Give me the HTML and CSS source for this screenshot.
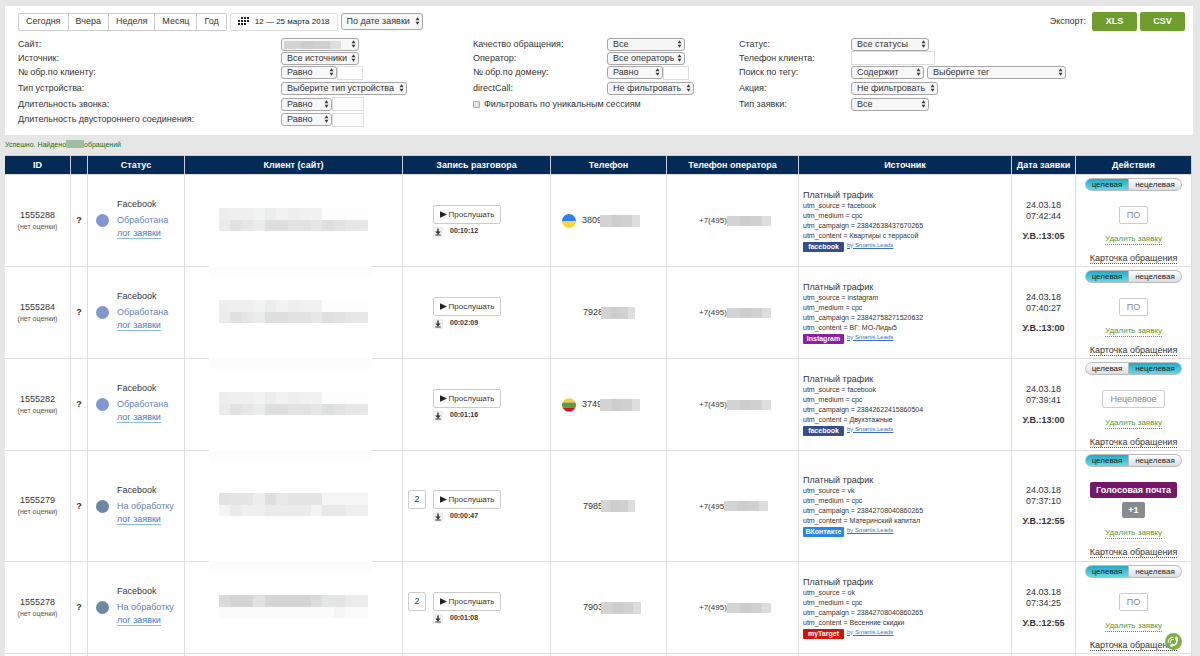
FILE: index.html
```html
<!DOCTYPE html>
<html lang="ru">
<head>
<meta charset="utf-8">
<title>Обращения</title>
<link rel="stylesheet" href="styles.css">
</head>
<body>
<svg class="defs" aria-hidden="true">
  <symbol id="updown" viewBox="0 0 6 9"><path d="M3 0L5.4 3.7H.6zM3 9L.6 5.3h4.8z" fill="#3c3c3c"/></symbol>
  <symbol id="play" viewBox="0 0 7 7"><path d="M0 .3L7 3.5 0 6.7z" fill="#222"/></symbol>
  <symbol id="down" viewBox="0 0 10 10"><path d="M4.3 1.5h1.4v3h2L5 7.4 2.300 4.500h2zM2.300 7.600h5.400v.9H2.300z" fill="#333"/></symbol>
  <symbol id="mosaic-a" viewBox="0 0 13 2" preserveAspectRatio="none">
    <g shape-rendering="crispEdges">
    <rect width="1" height="1" fill="#eeeeec"/><rect x="1" width="2" height="1" fill="#efefef"/><rect x="3" width="1" height="1" fill="#f1f3f2"/><rect x="4" width="1" height="1" fill="#ececec"/><rect x="5" width="1" height="1" fill="#f2f2f3"/><rect x="6" width="1" height="1" fill="#eee"/><rect x="7" width="2" height="1" fill="#f0f1f0"/><rect x="9" width="4" height="1" fill="#fdfdfd"/>
    <rect y="1" width="1" height="1" fill="#ebebeb"/><rect x="1" y="1" width="1" height="1" fill="#e1e1e1"/><rect x="2" y="1" width="1" height="1" fill="#e7e6e5"/><rect x="3" y="1" width="1" height="1" fill="#e9ebed"/><rect x="4" y="1" width="2" height="1" fill="#dededf"/><rect x="6" y="1" width="2" height="1" fill="#e2e2e2"/><rect x="8" y="1" width="1" height="1" fill="#e6e6e6"/><rect x="9" y="1" width="1" height="1" fill="#dedfdf"/><rect x="10" y="1" width="1" height="1" fill="#e1e3e2"/><rect x="11" y="1" width="1" height="1" fill="#e6e6e6"/><rect x="12" y="1" width="1" height="1" fill="#e5e7e9"/>
    </g>
  </symbol>
  <symbol id="mosaic-b" viewBox="0 0 13 2" preserveAspectRatio="none">
    <g shape-rendering="crispEdges">
    <rect width="1" height="1" fill="#e3e3e1"/><rect x="1" width="2" height="1" fill="#e5e5e5"/><rect x="3" width="1" height="1" fill="#ebeeed"/><rect x="4" width="1" height="1" fill="#dfdfdf"/><rect x="5" width="1" height="1" fill="#e8e8e8"/><rect x="6" width="3" height="1" fill="#e5e5e5"/><rect x="9" width="4" height="1" fill="#f5f5f5"/>
    <rect y="1" width="1" height="1" fill="#f4f4f4"/><rect x="1" y="1" width="1" height="1" fill="#eaeaea"/><rect x="2" y="1" width="2" height="1" fill="#efefee"/><rect x="4" y="1" width="4" height="1" fill="#ebebeb"/><rect x="8" y="1" width="1" height="1" fill="#f4f4f4"/><rect x="9" y="1" width="2" height="1" fill="#e8e8e8"/><rect x="11" y="1" width="2" height="1" fill="#eee"/>
    </g>
  </symbol>
  <symbol id="mosaic-c" viewBox="0 0 13 2" preserveAspectRatio="none">
    <g shape-rendering="crispEdges">
    <rect width="1" height="1" fill="#dadada"/><rect x="1" width="2" height="1" fill="#d5d5d5"/><rect x="3" width="1" height="1" fill="#e0e3e2"/><rect x="4" width="4" height="1" fill="#d5d5d6"/><rect x="8" width="1" height="1" fill="#dcdcdc"/><rect x="9" width="2" height="1" fill="#e4e5e5"/><rect x="11" width="2" height="1" fill="#ebebeb"/>
    <rect y="1" width="13" height="1" fill="#fafafa"/><rect x="10" y="1" width="1" height="1" fill="#f4f6f6"/>
    </g>
  </symbol>
</svg>

<section class="panel">
  <div class="topbar">
    <div class="periods">
      <button type="button">Сегодня</button><button type="button">Вчера</button><button type="button">Неделя</button><button type="button">Месяц</button><button type="button">Год</button>
    </div>
    <button type="button" class="range">
      <svg width="11" height="9" viewBox="0 0 11 9" aria-hidden="true"><g fill="#222"><rect x="3" width="2" height="2"/><rect x="6" width="2" height="2"/><rect x="9" width="2" height="2"/><rect y="3" width="2" height="2"/><rect x="3" y="3" width="2" height="2"/><rect x="6" y="3" width="2" height="2"/><rect x="9" y="3" width="2" height="2"/><rect y="6" width="2" height="2"/><rect x="3" y="6" width="2" height="2"/><rect x="6" y="6" width="2" height="2"/></g></svg>
      <span>12 — 25 марта 2018</span>
    </button>
    <span class="sel sel-sort"><select aria-label="Сортировка"><option>По дате заявки</option></select><svg><use href="#updown"/></svg></span>
    <span class="export-label">Экспорт:</span>
    <button type="button" class="export">XLS</button>
    <button type="button" class="export">CSV</button>
  </div>

  <form class="filters">
    <label for="site">Сайт:</label>
    <div class="ctl"><span class="sel w-m"><select id="site"><option></option></select><i class="veil veil-site"></i><svg><use href="#updown"/></svg></span></div>
    <label for="quality">Качество обращения:</label>
    <div class="ctl"><span class="sel w-m"><select id="quality"><option>Все</option></select><svg><use href="#updown"/></svg></span></div>
    <label for="status">Статус:</label>
    <div class="ctl"><span class="sel w-m"><select id="status"><option>Все статусы</option></select><svg><use href="#updown"/></svg></span></div>

    <label for="source">Источник:</label>
    <div class="ctl"><span class="sel w-m"><select id="source"><option>Все источники</option></select><svg><use href="#updown"/></svg></span></div>
    <label for="oper">Оператор:</label>
    <div class="ctl"><span class="sel w-m"><select id="oper"><option>Все операторы</option></select><svg><use href="#updown"/></svg></span></div>
    <label for="phone">Телефон клиента:</label>
    <div class="ctl"><input type="text" id="phone" class="in-l"></div>

    <label for="numc">№ обр.по клиенту:</label>
    <div class="ctl"><span class="sel w-s"><select id="numc"><option>Равно</option></select><svg><use href="#updown"/></svg></span><input type="text" class="in-s" aria-label="№ обр.по клиенту"></div>
    <label for="numd">№ обр.по домену:</label>
    <div class="ctl"><span class="sel w-s"><select id="numd"><option>Равно</option></select><svg><use href="#updown"/></svg></span><input type="text" class="in-s" aria-label="№ обр.по домену"></div>
    <label for="tag">Поиск по тегу:</label>
    <div class="ctl ctl-gap"><span class="sel w-t"><select id="tag"><option>Содержит</option></select><svg><use href="#updown"/></svg></span><span class="sel w-xl"><select aria-label="Тег"><option>Выберите тег</option></select><svg><use href="#updown"/></svg></span></div>

    <label for="device">Тип устройства:</label>
    <div class="ctl"><span class="sel w-l"><select id="device"><option>Выберите тип устройства</option></select><svg><use href="#updown"/></svg></span></div>
    <label for="direct">directCall:</label>
    <div class="ctl"><span class="sel w-n"><select id="direct"><option>Не фильтровать</option></select><svg><use href="#updown"/></svg></span></div>
    <label for="promo">Акция:</label>
    <div class="ctl"><span class="sel w-n"><select id="promo"><option>Не фильтровать</option></select><svg><use href="#updown"/></svg></span></div>

    <label for="dur">Длительность звонка:</label>
    <div class="ctl"><span class="sel w-xs"><select id="dur"><option>Равно</option></select><svg><use href="#updown"/></svg></span><input type="text" class="in-m" aria-label="Длительность звонка"></div>
    <div class="check"><input type="checkbox" id="uniq"><label for="uniq">Фильтровать по уникальным сессиям</label></div>
    <label for="kind">Тип заявки:</label>
    <div class="ctl"><span class="sel w-m"><select id="kind"><option>Все</option></select><svg><use href="#updown"/></svg></span></div>

    <label for="dur2">Длительность двустороннего соединения:</label>
    <div class="ctl"><span class="sel w-xs"><select id="dur2"><option>Равно</option></select><svg><use href="#updown"/></svg></span><input type="text" class="in-m" aria-label="Длительность двустороннего соединения"></div>
  </form>
</section>

<p class="found">Успешно. Найдено<i class="veil veil-count"></i>обращений</p>

<table class="leads">
  <colgroup><col class="c-id"><col class="c-q"><col class="c-status"><col><col class="c-rec"><col class="c-phone"><col class="c-oper"><col class="c-src"><col class="c-date"><col class="c-act"></colgroup>
  <thead>
    <tr><th>ID</th><th></th><th>Статус</th><th>Клиент (сайт)</th><th>Запись разговора</th><th>Телефон</th><th>Телефон оператора</th><th>Источник</th><th>Дата заявки</th><th>Действия</th></tr>
  </thead>
  <tbody>
    <tr>
      <td class="id">1555288<small>(нет оценки)</small></td>
      <td class="q">?</td>
      <td><div class="status done"><i class="dot"></i><div><p>Facebook</p><p class="state">Обработана</p><a href="#log">лог заявки</a></div></div></td>
      <td class="client"><svg class="mosaic"><use href="#mosaic-a"/></svg></td>
      <td><div class="rec"><button type="button" class="listen"><svg><use href="#play"/></svg>Прослушать</button><div class="time"><a href="#dl" class="dl" aria-label="Скачать"><svg><use href="#down"/></svg></a><b>00:10:12</b></div></div></td>
      <td><div class="phone"><svg class="flag" viewBox="0 0 14 14"><path d="M0 7a7 7 0 0 1 14 0z" fill="#2f80ed"/><path d="M0 7a7 7 0 0 0 14 0z" fill="#ffd43b"/></svg><span>3809</span><i class="veil"></i></div></td>
      <td><div class="oper">+7(495)<i class="veil"></i></div></td>
      <td><div class="src"><h4>Платный трафик</h4><p>utm_source = facebook</p><p>utm_medium = cpc</p><p>utm_campaign = 23842638437670265</p><p>utm_content = Квартиры с террасой</p><div class="from"><span class="tag fb">facebook</span><a href="#sl">by Smartis.Leads</a></div></div></td>
      <td class="date">24.03.18<br>07:42:44<b>У.В.:13:05</b></td>
      <td class="act"><div class="toggle"><button type="button" class="on">целевая</button><button type="button">нецелевая</button></div><div class="marks"><button type="button" class="mark">ПО</button></div><a href="#del" class="del">Удалить заявку</a><a href="#card" class="card">Карточка обращения</a></td>
    </tr>
    <tr>
      <td class="id">1555284<small>(нет оценки)</small></td>
      <td class="q">?</td>
      <td><div class="status done"><i class="dot"></i><div><p>Facebook</p><p class="state">Обработана</p><a href="#log">лог заявки</a></div></div></td>
      <td class="client"><i class="mask"></i><svg class="mosaic"><use href="#mosaic-a"/></svg></td>
      <td><div class="rec"><button type="button" class="listen"><svg><use href="#play"/></svg>Прослушать</button><div class="time"><a href="#dl" class="dl" aria-label="Скачать"><svg><use href="#down"/></svg></a><b>00:02:09</b></div></div></td>
      <td><div class="phone"><span>7928</span><i class="veil veil-s"></i></div></td>
      <td><div class="oper">+7(495)<i class="veil"></i></div></td>
      <td><div class="src"><h4>Платный трафик</h4><p>utm_source = instagram</p><p>utm_medium = cpc</p><p>utm_campaign = 23842758271520632</p><p>utm_content = ВГ: МО-Лиды5</p><div class="from"><span class="tag ig">instagram</span><a href="#sl">by Smartis.Leads</a></div></div></td>
      <td class="date">24.03.18<br>07:40:27<b>У.В.:13:00</b></td>
      <td class="act"><div class="toggle"><button type="button" class="on">целевая</button><button type="button">нецелевая</button></div><div class="marks"><button type="button" class="mark">ПО</button></div><a href="#del" class="del">Удалить заявку</a><a href="#card" class="card">Карточка обращения</a></td>
    </tr>
    <tr>
      <td class="id">1555282<small>(нет оценки)</small></td>
      <td class="q">?</td>
      <td><div class="status done"><i class="dot"></i><div><p>Facebook</p><p class="state">Обработана</p><a href="#log">лог заявки</a></div></div></td>
      <td class="client"><i class="mask"></i><svg class="mosaic"><use href="#mosaic-a"/></svg></td>
      <td><div class="rec"><button type="button" class="listen"><svg><use href="#play"/></svg>Прослушать</button><div class="time"><a href="#dl" class="dl" aria-label="Скачать"><svg><use href="#down"/></svg></a><b>00:01:16</b></div></div></td>
      <td><div class="phone"><svg class="flag" viewBox="0 0 14 14"><path d="M.6 4.500a7 7 0 0 1 12.800 0z" fill="#f9cf3a"/><path d="M.5 4.500h13a7 7 0 0 1 0 5H.5a7 7 0 0 1 0-5z" fill="#5f9b3c"/><path d="M.6 9.500a7 7 0 0 0 12.800 0z" fill="#d80f2a"/></svg><span>3749</span><i class="veil"></i></div></td>
      <td><div class="oper">+7(495)<i class="veil"></i></div></td>
      <td><div class="src"><h4>Платный трафик</h4><p>utm_source = facebook</p><p>utm_medium = cpc</p><p>utm_campaign = 23842622415860504</p><p>utm_content = Двухэтажные</p><div class="from"><span class="tag fb">facebook</span><a href="#sl">by Smartis.Leads</a></div></div></td>
      <td class="date">24.03.18<br>07:39:41<b>У.В.:13:00</b></td>
      <td class="act"><div class="toggle"><button type="button">целевая</button><button type="button" class="on">нецелевая</button></div><div class="marks"><button type="button" class="mark">Нецелевое</button></div><a href="#del" class="del">Удалить заявку</a><a href="#card" class="card">Карточка обращения</a></td>
    </tr>
    <tr class="tall">
      <td class="id">1555279<small>(нет оценки)</small></td>
      <td class="q">?</td>
      <td><div class="status todo"><i class="dot"></i><div><p>Facebook</p><p class="state">На обработку</p><a href="#log">лог заявки</a></div></div></td>
      <td class="client"><i class="mask"></i><svg class="mosaic"><use href="#mosaic-b"/></svg></td>
      <td><div class="rec"><button type="button" class="count">2</button><button type="button" class="listen"><svg><use href="#play"/></svg>Прослушать</button><div class="time"><a href="#dl" class="dl" aria-label="Скачать"><svg><use href="#down"/></svg></a><b>00:00:47</b></div></div></td>
      <td><div class="phone"><span>7985</span><i class="veil veil-s"></i></div></td>
      <td><div class="oper">+7(495<i class="veil"></i></div></td>
      <td><div class="src"><h4>Платный трафик</h4><p>utm_source = vk</p><p>utm_medium = cpc</p><p>utm_campaign = 23842708040860265</p><p>utm_content = Материнский капитал</p><div class="from"><span class="tag vk">ВКонтакте</span><a href="#sl">by Smartis.Leads</a></div></div></td>
      <td class="date">24.03.18<br>07:37:10<b>У.В.:12:55</b></td>
      <td class="act"><div class="toggle"><button type="button" class="on">целевая</button><button type="button">нецелевая</button></div><div class="marks"><button type="button" class="mark voice">Голосовая почта</button><button type="button" class="mark plus">+1</button></div><a href="#del" class="del">Удалить заявку</a><a href="#card" class="card">Карточка обращения</a></td>
    </tr>
    <tr>
      <td class="id">1555278<small>(нет оценки)</small></td>
      <td class="q">?</td>
      <td><div class="status todo"><i class="dot"></i><div><p>Facebook</p><p class="state">На обработку</p><a href="#log">лог заявки</a></div></div></td>
      <td class="client"><i class="mask"></i><svg class="mosaic"><use href="#mosaic-c"/></svg></td>
      <td><div class="rec"><button type="button" class="count">2</button><button type="button" class="listen"><svg><use href="#play"/></svg>Прослушать</button><div class="time"><a href="#dl" class="dl" aria-label="Скачать"><svg><use href="#down"/></svg></a><b>00:01:08</b></div></div></td>
      <td><div class="phone"><span>7903</span><i class="veil"></i></div></td>
      <td><div class="oper">+7(495)<i class="veil"></i></div></td>
      <td><div class="src"><h4>Платный трафик</h4><p>utm_source = ok</p><p>utm_medium = cpc</p><p>utm_campaign = 23842708040860265</p><p>utm_content = Весенние скидки</p><div class="from"><span class="tag mt">myTarget</span><a href="#sl">by Smartis.Leads</a></div></div></td>
      <td class="date">24.03.18<br>07:34:25<b>У.В.:12:55</b></td>
      <td class="act"><div class="toggle"><button type="button" class="on">целевая</button><button type="button">нецелевая</button></div><div class="marks"><button type="button" class="mark">ПО</button></div><a href="#del" class="del">Удалить заявку</a><a href="#card" class="card">Карточка обращения</a></td>
    </tr>
    <tr class="next"><td></td><td></td><td></td><td></td><td></td><td></td><td></td><td></td><td></td><td></td></tr>
  </tbody>
</table>

<button type="button" class="call" aria-label="Обратный звонок">
  <svg viewBox="0 0 17 17"><circle cx="8.500" cy="8.500" r="8.500" fill="#7fae45"/><g fill="none" stroke="#fff" stroke-linecap="round"><path d="M6.500 12.800Q13.300 12.500 11.800 4.800" stroke-width="1.500"/><path d="M6.400 12.400l1.300-.6M11.300 4.900l.3 1.700" stroke-width="2.400"/><path d="M3.200 9.500a4.600 4.600 0 0 1 5-5.400M5.400 9.600a2.500 2.500 0 0 1 3-3.200"/></g></svg>
</button>
</body>
</html>
```
FILE: styles.css
```css
* { box-sizing: border-box; }
body {
  margin: 0;
  padding: 6px 8px 0 5px;
  background: #e6e6e6;
  color: #333;
  font: 9px/11px "Liberation Sans", Arial, sans-serif;
}
p, h4 { margin: 0; font-weight: normal; }
button, input, select { margin: 0; font: inherit; color: inherit; }
button { padding: 0; cursor: pointer; }
.defs { display: none; }

/* filter panel */
.panel { margin-right: -1px; padding: 6px 8px 8px 13px; background: #fff; }
.topbar { display: flex; align-items: center; gap: 3px; height: 19px; }
.periods { display: flex; }
.periods button {
  height: 18px;
  padding: 0 7px;
  border: 1px solid #ccc;
  border-left-width: 0;
  background: #fff;
}
.periods button:first-child { border-left-width: 1px; border-radius: 2px 0 0 2px; }
.periods button:last-child { border-radius: 0 2px 2px 0; }
.range {
  display: flex;
  align-items: center;
  gap: 6px;
  height: 18px;
  padding: 0 7px;
  border: 1px solid #ddd;
  border-radius: 2px;
  background: #fff;
  color: #222;
  font-size: 8px;
}
.export-label { margin-left: auto; padding-right: 3px; }
.export {
  width: 45px;
  height: 19px;
  border: 0;
  border-radius: 2px;
  background: #6f9e2c;
  color: #fff;
  font-weight: bold;
}

.sel { position: relative; display: inline-flex; height: 13px; }
.sel select {
  width: 100%;
  height: 100%;
  padding: 0 10px 0 5px;
  border: 1px solid #a6a6a6;
  border-radius: 3px;
  background: #f7f7f7;
  line-height: 11px;
  appearance: none;
}
.sel svg { position: absolute; top: 2px; right: 3px; width: 5px; height: 8px; pointer-events: none; }
.sel-sort { width: 82px; height: 17px; }
.sel-sort svg { top: 4px; }
.w-xs { width: 51px; }
.w-s { width: 56px; }
.w-t { width: 73px; }
.w-m { width: 78px; }
.w-n { width: 87px; }
.w-l { width: 126px; }
.w-xl { width: 139px; }

.filters {
  display: grid;
  grid-template-columns: 263fr 192fr 134fr 132fr 112fr 334fr;
  grid-template-rows: 14px 14px 15px 16px 16px 15px;
  align-items: center;
  margin-top: 6px;
}
.ctl { display: flex; align-items: center; white-space: nowrap; }
.ctl-gap { gap: 3px; }
.filters input[type="text"] { height: 14px; padding: 0 2px; border: 1px solid #ddd; background: #fff; }
.in-s { width: 26px; }
.in-m { width: 32px; }
.in-l { width: 84px; }
.check { display: flex; align-items: center; gap: 4px; grid-column: span 2; }
.check input {
  width: 7px;
  height: 7px;
  border: 1px solid #aaa;
  border-radius: 1px;
  background: #e6e6e6;
  appearance: none;
}

/* blurred-out values */
.veil {
  display: inline-block;
  background: linear-gradient(90deg, #d3d3d3 0 30%, #cdcdcd 30% 55%, #d0d0d0 55% 80%, #dcdddf 80%);
}
.veil-site { position: absolute; top: 3px; left: 3px; width: 57px; height: 8px; }
.veil-count { width: 18px; height: 8px; background: #9fbd9f; vertical-align: -1px; }

.found { height: 20px; color: #10700f; font-size: 7px; line-height: 20px; }

/* leads table */
.leads {
  width: 100%;
  border-spacing: 0;
  table-layout: fixed;
  background: #fff;
}
.c-id { width: 66px; }
.c-q { width: 17px; }
.c-status { width: 97px; }
.c-rec { width: 148px; }
.c-phone { width: 116px; }
.c-oper { width: 132px; }
.c-src { width: 213px; }
.c-date { width: 64px; }
.c-act { width: 116px; }
.leads th {
  height: 19px;
  padding: 0;
  border: solid #ccd0d6;
  border-width: 1px 1px 0 0;
  background: #032b55;
  color: #fff;
  white-space: nowrap;
}
.leads td {
  height: 92px;
  padding: 0;
  border: solid #ddd;
  border-width: 1px 1px 0 0;
  vertical-align: middle;
}
.leads .tall td { height: 111px; }
.leads .next td { height: 3px; }
.id, .q, .date, .act { text-align: center; }
.id small { display: block; color: #555; font-size: 7px; }
.q { font-weight: bold; }

.status { display: flex; align-items: center; gap: 8px; padding-left: 8px; }
.status p { height: 16px; }
.status .state { height: 13px; }
.status > div { padding-bottom: 3px; }
.status a { color: #3f7cc4; border-bottom: 1px solid #8bbbe4; text-decoration: none; }
.dot { width: 13px; height: 13px; border-radius: 50%; }
.done .dot { background: #8097cf; }
.done .state { color: #6583bd; }
.todo .dot { background: #6d88a6; }
.todo .state { color: #6580a6; }

.leads .client { position: relative; padding-bottom: 3px; text-align: center; }
.mosaic { width: 149px; height: 23px; vertical-align: middle; }
.mask { position: absolute; top: -1px; left: 24px; right: 30px; height: 11px; background: #fcfcfc; }

.rec {
  display: grid;
  grid-template-columns: 18px 68px;
  column-gap: 7px;
  padding-left: 5px;
}
.count, .listen { height: 19px; border: 1px solid #ccc; border-radius: 2px; background: #fff; }
.listen { display: flex; align-items: center; justify-content: center; gap: 2px; font-size: 8px; }
.listen, .time { grid-column: 2; }
.listen svg { width: 7px; height: 7px; }
.time { display: flex; gap: 7px; padding-top: 1px; font-size: 7px; }
.dl { width: 10px; height: 10px; margin-top: 2px; border-radius: 1px; background: #eee; }
.dl svg { display: block; width: 10px; height: 10px; }

.phone { display: flex; align-items: center; justify-content: flex-start; padding-left: 11px; }
.phone span { padding-left: 6px; }
.phone span:first-child { padding-left: 21px; }
.flag { width: 14px; height: 14px; }
.phone .veil { width: 40px; height: 12px; margin-left: -2px; }
.phone .veil-s { width: 34px; }
.oper { display: flex; align-items: center; padding-left: 32px; font-size: 8px; }
.oper .veil { width: 44px; height: 10px; }

.src { padding-left: 4px; font-size: 7px; line-height: 10px; white-space: nowrap; }
.src h4 { font-size: 9px; line-height: 11px; }
.from { display: flex; gap: 3px; margin-top: 1px; font-size: 6px; line-height: 6px; }
.from a { color: #3f6fc0; }
.tag { width: 41px; height: 10px; border-radius: 1px; color: #fff; font-size: 7px; line-height: 10px; font-weight: bold; text-align: center; }
.fb { background: #334f8d; }
.ig { background: #8c1fa3; }
.vk { background: #2787e6; }
.mt { background: #d0150f; }

.date b { display: block; margin-top: 9px; }

.leads .act { vertical-align: top; padding-top: 3px; }
.toggle { display: inline-flex; height: 13px; vertical-align: top; }
.toggle button {
  width: 44px;
  border: 1px solid #bbb;
  border-radius: 7px 0 0 7px;
  background: linear-gradient(#fff, #dcdcdc);
  color: #222;
  font-size: 8px;
  line-height: 10px;
}
.toggle button + button { width: 53px; border-left: 0; border-radius: 0 7px 7px 0; }
.toggle .on { background: linear-gradient(#22aac6, #66d8e8); }
.marks { display: flex; flex-direction: column; align-items: center; gap: 4px; margin: 15px 0 10px; }
.mark {
  height: 18px;
  padding: 0 7px;
  border: 1px solid #ccc;
  border-radius: 2px;
  background: #fff;
  color: #888;
}
.voice, .plus { height: 16px; padding: 0 6px; border: 0; color: #fff; font-weight: bold; }
.voice { background: #75186a; }
.plus { background: #858b90; }
.del, .card { display: table; margin: 0 auto; line-height: 10px; text-decoration: none; white-space: nowrap; }
.del { color: #5f962a; font-size: 8px; border-bottom: 1px dotted #5f962a; }
.card { margin-top: 8px; color: #333; border-bottom: 1px dotted #555; }

.call { position: fixed; right: 18px; bottom: 6px; width: 17px; height: 17px; border: 0; background: none; }
.call svg { display: block; width: 17px; height: 17px; }
```
